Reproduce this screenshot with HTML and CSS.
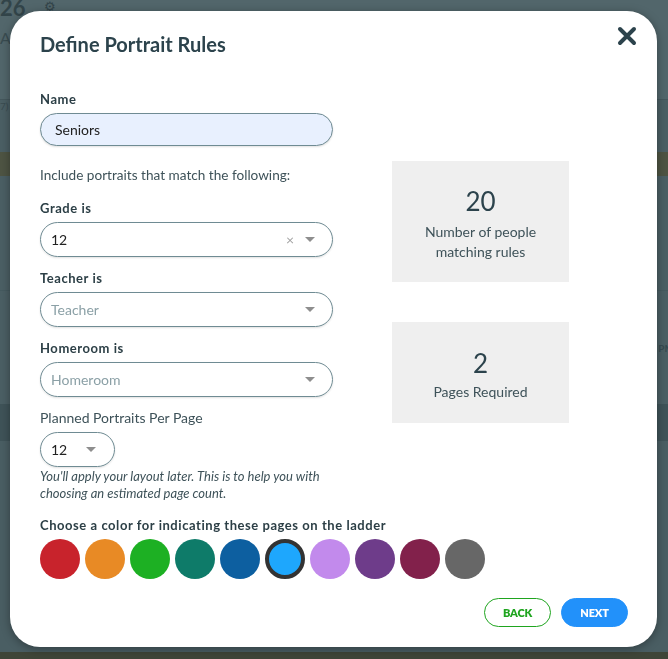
FILE: index.html
```html
<!DOCTYPE html>
<html>
<head>
<meta charset="utf-8">
<title>Define Portrait Rules</title>
<link rel="stylesheet" href="styles.css">
</head>
<body>
<div class="page">
  <div class="bg-top">
    <span class="bg-num">26</span>
    <span class="bg-gear">&#9881;</span>
  </div>
  <div class="bg-sub">A</div>
  <div class="bg-row1">7)</div>
  <div class="bg-band"></div>
  <div class="bg-row2"></div>
  <div class="bg-row3"><span class="bg-pm">PM</span></div>
  <div class="bg-dark"></div>
  <div class="bg-row4"></div>
  <div class="bg-foot"></div>
</div>

<div class="modal" role="dialog">
  <div class="modal-head">
    <h1 class="title">Define Portrait Rules</h1>
    <button class="close" aria-label="Close">
      <svg width="20" height="20" viewBox="0 0 20 20"><path d="M3 3 L17 17 M17 3 L3 17" stroke="#2c434c" stroke-width="4" stroke-linecap="round" fill="none"/></svg>
    </button>
  </div>

  <div class="body">
    <div class="form">
      <label class="lbl">Name</label>
      <div class="input filled">Seniors</div>

      <p class="intro">Include portraits that match the following:</p>

      <label class="lbl">Grade is</label>
      <div class="select">
        <span class="val">12</span>
        <span class="clear">&#215;</span>
        <span class="arrow"></span>
      </div>

      <label class="lbl">Teacher is</label>
      <div class="select">
        <span class="val ph">Teacher</span>
        <span class="arrow"></span>
      </div>

      <label class="lbl">Homeroom is</label>
      <div class="select">
        <span class="val ph">Homeroom</span>
        <span class="arrow"></span>
      </div>

      <p class="plain">Planned Portraits Per Page</p>
      <div class="select small">
        <span class="val">12</span>
        <span class="arrow"></span>
      </div>
      <p class="hint">You'll apply your layout later. This is to help you with choosing an estimated page count.</p>
    </div>

    <div class="stats">
      <div class="stat first">
        <div class="stat-num">20</div>
        <div class="stat-lbl">Number of people<br>matching rules</div>
      </div>
      <div class="stat second">
        <div class="stat-num">2</div>
        <div class="stat-lbl">Pages Required</div>
      </div>
    </div>
  </div>

  <label class="lbl color-lbl">Choose a color for indicating these pages on the ladder</label>
  <div class="swatches">
    <span class="sw c1"></span>
    <span class="sw c2"></span>
    <span class="sw c3"></span>
    <span class="sw c4"></span>
    <span class="sw c5"></span>
    <span class="sw c6 selected"></span>
    <span class="sw c7"></span>
    <span class="sw c8"></span>
    <span class="sw c9"></span>
    <span class="sw c10"></span>
  </div>

  <div class="footer">
    <button class="btn back">BACK</button>
    <button class="btn next">NEXT</button>
  </div>
</div>
</body>
</html>
```

FILE: styles.css
```css
* { box-sizing: border-box; }
html, body { margin: 0; padding: 0; }
body {
  width: 668px;
  height: 659px;
  overflow: hidden;
  background: #4a5e63;
  font-family: "Lato", "Liberation Sans", sans-serif;
  color: #2c3f46;
}

/* dimmed page behind the dialog */
.page { width: 668px; height: 659px; display: flex; flex-direction: column; }
.bg-top { height: 26px; background: #52666b; display: flex; align-items: flex-start; gap: 18px; }
.bg-num { font-size: 22px; font-weight: 700; color: #324449; line-height: 18px; margin-top: -1px; }
.bg-gear { font-size: 13px; color: #324449; line-height: 12px; }
.bg-sub { height: 74px; background: #52666b; color: #3a4c51; font-size: 16px; padding-top: 2px; border-bottom: 1px solid #45585d; }
.bg-row1 { height: 52px; background: #4b5f64; color: #3a4c51; font-size: 10px; padding-top: 0; }
.bg-band { height: 24px; background: #4e5443; }
.bg-row2 { height: 115px; background: #4b5f64; border-bottom: 1px solid #455a5f; }
.bg-row3 { height: 113px; background: #4b5f64; display: flex; justify-content: flex-end; align-items: center; }
.bg-pm { font-size: 10px; color: #364a50; font-weight: 700; margin-right: -6px; }
.bg-dark { height: 37px; background: #3f5358; }
.bg-row4 { height: 211px; background: #4a5e63; }
.bg-foot { flex: 1; background: #3f4538; }

/* dialog */
.modal {
  position: fixed;
  left: 10px;
  top: 11px;
  width: 647px;
  height: 636px;
  background: #fff;
  border-radius: 30px;
  box-shadow: 0 2px 10px rgba(0, 0, 0, 0.35);
  padding: 21px 29px 0 30px;
  display: flex;
  flex-direction: column;
}
.modal-head { display: flex; justify-content: space-between; align-items: flex-start; margin-right: -9px; }
.title { margin: 0; font-size: 20px; line-height: 24px; font-weight: 700; color: #2c434c; }
.close { border: 0; background: none; padding: 0; margin-top: -6px; width: 20px; height: 20px; cursor: pointer; }
.close svg { display: block; }

.body { display: flex; gap: 59px; margin-top: 35px; }
.form { width: 293px; display: flex; flex-direction: column; }
.lbl { display: block; font-size: 13px; line-height: 16px; font-weight: 700; letter-spacing: 0.55px; color: #2c3f46; margin-bottom: 6px; }
.input, .select {
  height: 35px;
  border: 1px solid #6f8b93;
  border-radius: 18px;
  box-shadow: 0 1px 2px rgba(0, 0, 0, 0.12);
  display: flex;
  align-items: center;
  font-size: 14px;
  color: #222;
}
.input { height: 33px; padding-left: 14px; }
.input.filled { background: #e8f0fe; }
.intro { margin: 20px 0 16px; font-size: 13.6px; line-height: 18px; color: #3e5259; }
.select { padding: 0 17px 0 10px; margin-bottom: 13px; }
.select .val { flex: 1; }
.select .ph { color: #8ba0a6; }
.clear { color: #a3a3a3; font-size: 14px; margin-right: 11px; line-height: 1; }
.arrow { width: 0; height: 0; border-left: 5px solid transparent; border-right: 5px solid transparent; border-top: 5px solid #8e8e8e; }
.plain { margin: -1px 0 5px; font-size: 14px; line-height: 18px; color: #3e5259; }
.select.small { width: 75px; margin-bottom: 0; padding-right: 18px; }
.hint { margin: 1px 0 0; font-size: 13px; line-height: 17px; font-style: italic; color: #3e5259; }

.stats { width: 177px; display: flex; flex-direction: column; gap: 40px; margin-top: 70px; }
.stat { background: #efefef; display: flex; flex-direction: column; align-items: center; text-align: center; }
.stat.first { height: 121px; padding-top: 24px; }
.stat.second { height: 101px; padding-top: 25px; }
.stat-num { font-size: 26px; line-height: 32px; color: #2c434c; }
.stat-lbl { font-size: 14px; line-height: 20px; color: #3e5259; margin-top: 5px; }
.second .stat-lbl { margin-top: 3px; }

.color-lbl { margin-top: 15px; margin-bottom: 6px; }
.swatches { display: flex; gap: 5px; }
.sw { width: 40px; height: 40px; border-radius: 50%; display: block; }
.c1 { background: #c8232c; }
.c2 { background: #e88a25; }
.c3 { background: #1db023; }
.c4 { background: #0e7b69; }
.c5 { background: #0d5fa0; }
.c6 { background: #1ea7fd; }
.c6.selected { border: 4px solid #333; }
.c7 { background: #c28aec; }
.c8 { background: #6e3c8a; }
.c9 { background: #82214b; }
.c10 { background: #676767; }

.footer { display: flex; justify-content: flex-end; gap: 10px; margin-top: 19px; }
.btn {
  width: 67px;
  height: 29px;
  border-radius: 15px;
  font-family: inherit;
  font-size: 11px;
  font-weight: 800;
  letter-spacing: -0.2px;
  cursor: pointer;
}
.back { background: #fff; border: 1px solid #1fa51f; color: #1fa51f; }
.next { background: #2291fa; border: 1px solid #2291fa; color: #fff; }
```
